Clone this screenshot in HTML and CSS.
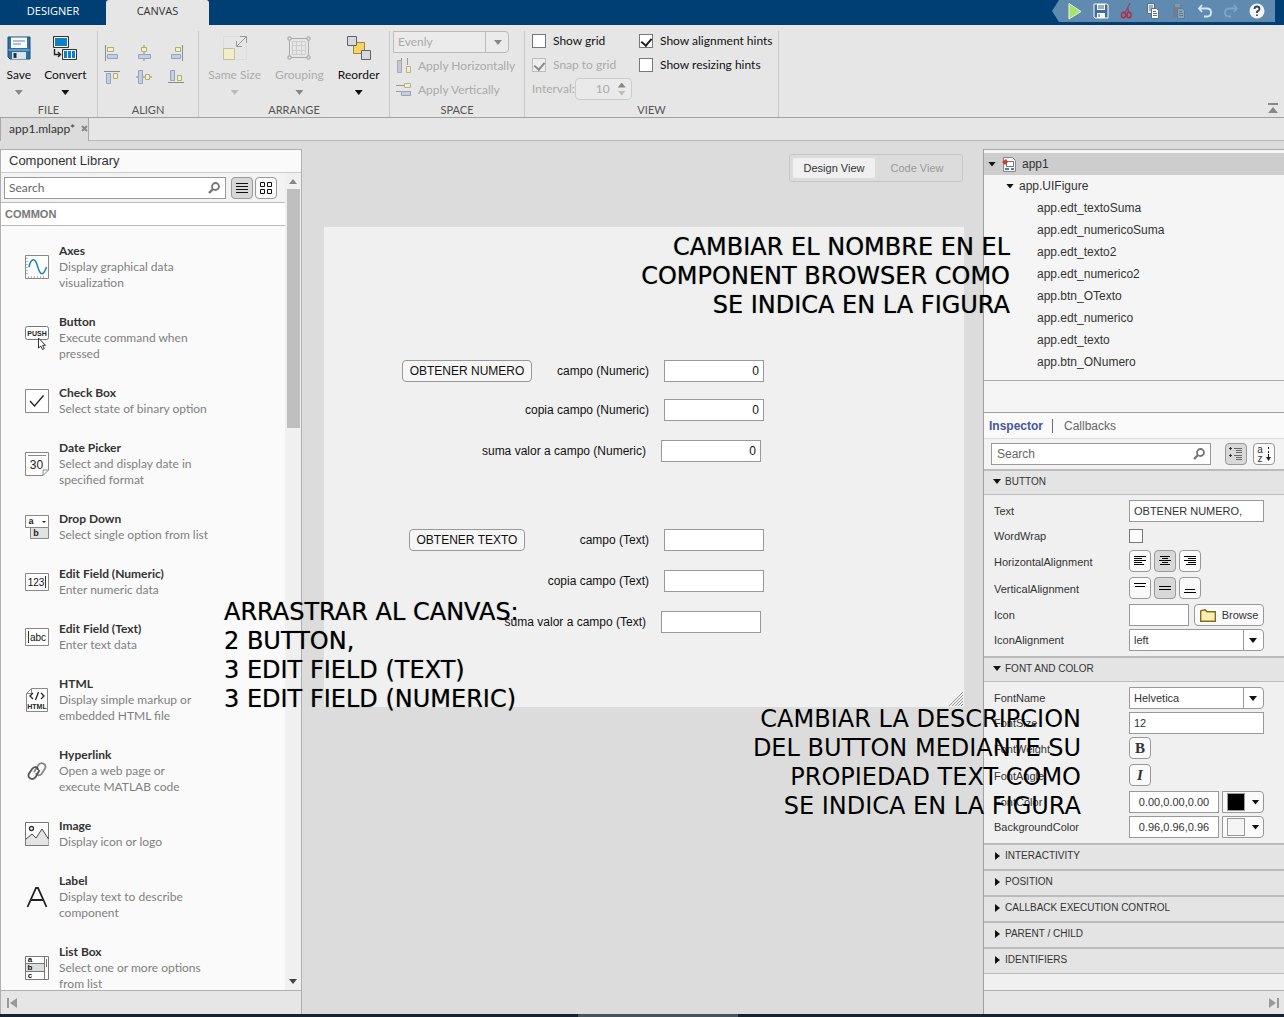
FILE: index.html
```html
<!DOCTYPE html>
<html lang="es">
<head>
<meta charset="utf-8">
<title>App Designer - app1.mlapp</title>
<link rel="stylesheet" href="styles.css">
</head>
<body>
<div class="app">
  <header class="tabbar">
    <button class="tab">DESIGNER</button>
    <button class="tab tab-active">CANVAS</button>
    <div class="quick">
      <button class="quick-btn" aria-label="Run"><svg width="16" height="18" viewBox="0 0 16 18"><path d="M2 1.500L14 9.500L2 17Z" fill="#a5e36a" stroke="#e8f8d8"/></svg></button>
      <button class="quick-btn" aria-label="Save"><svg width="16" height="16" viewBox="0 0 16 16"><path d="M1 1h13l1 1v13H2l-1-1z" fill="#3d6e9c" stroke="#fff"/><path d="M4 1h8v6H4zM4 10h8v5H4z" fill="#fff"/><path d="M5 3h6M5 5h6M6 11v3" stroke="#345d86"/></svg></button>
      <button class="quick-btn" aria-label="Cut"><svg width="16" height="16" viewBox="0 0 16 16"><path d="M11 0L6 10M9 5L9.500 10" stroke="#8b4862" stroke-width="1.300"/><ellipse cx="4.500" cy="12" rx="2" ry="2.800" fill="none" stroke="#b52a4a" stroke-width="1.500"/><ellipse cx="10" cy="12" rx="2" ry="2.800" fill="none" stroke="#b52a4a" stroke-width="1.500"/></svg></button>
      <button class="quick-btn" aria-label="Copy"><svg width="16" height="16" viewBox="0 0 16 16"><path d="M2.500 .5h7v10h-7z" fill="#e9eef3" stroke="#53708e"/><path d="M4 3h4M4 5h4M4 7h2" stroke="#53708e"/><path d="M6.500 5.500h5l2 2v8h-7z" fill="#fff" stroke="#53708e"/><path d="M8 8.500h3M8 10.500h4M8 12.500h4" stroke="#53708e"/></svg></button>
      <button class="quick-btn" aria-label="Paste"><svg width="16" height="16" viewBox="0 0 16 16"><path d="M2 2h9v12H2z" fill="#6f7f8c"/><path d="M4 1h5v3H4z" fill="#8797a4"/><path d="M6.500 5.500h5l2 2v8h-7z" fill="#86a2bc" stroke="#5d7c99"/><path d="M8 8.500h3M8 10.500h4M8 12.500h4" stroke="#5d7c99"/></svg></button>
      <button class="quick-btn" aria-label="Undo"><svg width="16" height="16" viewBox="0 0 16 16"><path d="M5 2L2 5.500L5 9M2 5.500H10Q14 5.500 14 9.500T10 13.500H7" fill="none" stroke="#d6e8fa" stroke-width="1.800"/></svg></button>
      <button class="quick-btn" aria-label="Redo"><svg width="16" height="16" viewBox="0 0 16 16"><path d="M11 2L14 5.500L11 9M14 5.500H6Q2 5.500 2 9.500T6 13.500H8" fill="none" stroke="#7fa5c9" stroke-width="1.800"/></svg></button>
      <button class="quick-btn" aria-label="Help"><svg width="16" height="16" viewBox="0 0 16 16"><circle cx="8" cy="8" r="7.500" fill="#f4f6f8"/><path d="M5.500 6Q5.500 3.500 8 3.500T10.500 6Q10.500 7.500 8 8.500V10M8 11.500V13" fill="none" stroke="#3d4650" stroke-width="1.800"/></svg></button>
    </div>
  </header>

  <section class="toolstrip">
    <div class="group group-file">
      <div class="group-body">
        <button class="big-btn">
          <svg width="24" height="24" viewBox="0 0 24 24"><path d="M1 1h22v22H3l-2-2z" fill="#2e6f9f" stroke="#1f4f76"/><path d="M4 1.500h16V12H4z" fill="#f5fafd"/><path d="M6 5h12M6 8h8" stroke="#6d8698"/><path d="M1.500 14h21" stroke="#9cc9e6"/><path d="M5 16h14v7H5z" fill="#dce4ea"/><path d="M8 17v5" stroke="#24333f" stroke-width="3"/></svg>
          <span>Save</span><i class="caret caret-grey"></i>
        </button>
        <button class="big-btn">
          <svg width="24" height="24" viewBox="0 0 24 24"><path d="M.5 .5h15v11H.5z" fill="#0b82c8" stroke="#333"/><path d="M1.500 1.500h13v9h-13z" fill="none" stroke="#fff"/><path d="M9.500 13.500h14v10h-14z" fill="#0b82c8" stroke="#333"/><path d="M10.500 14.500h12v8h-12zM14.500 14.500v8M18.500 14.500v8" fill="none" stroke="#fff"/><path d="M1.500 13v5.500H7M5 16l2.500 2.500L5 21" fill="none" stroke="#222" stroke-width="1.400"/></svg>
          <span>Convert</span><i class="caret"></i>
        </button>
      </div>
      <h2 class="group-name">FILE</h2>
    </div>

    <div class="group group-align">
      <div class="group-body align-grid">
        <button class="mini" aria-label="Align left"><svg width="16" height="16" viewBox="0 0 16 16"><path d="M1.500 0v16" stroke="#8a8a8a"/><path d="M3.500 2.500h6v4h-6z" fill="#f3efc8" stroke="#b5ab70"/><path d="M3.500 9.500h10v4h-10z" fill="#c3cfe2" stroke="#93a2bd"/></svg></button>
        <button class="mini" aria-label="Align center"><svg width="16" height="16" viewBox="0 0 16 16"><path d="M8 0v16" stroke="#8a8a8a"/><path d="M5.500 2.500h5v4h-5z" fill="#f3efc8" stroke="#b5ab70"/><path d="M2.500 9.500h12v4h-12z" fill="#c3cfe2" stroke="#93a2bd"/></svg></button>
        <button class="mini" aria-label="Align right"><svg width="16" height="16" viewBox="0 0 16 16"><path d="M14.500 0v16" stroke="#8a8a8a"/><path d="M7.500 2.500h5v4h-5z" fill="#f3efc8" stroke="#b5ab70"/><path d="M3.500 9.500h9v4h-9z" fill="#c3cfe2" stroke="#93a2bd"/></svg></button>
        <button class="mini" aria-label="Align top"><svg width="16" height="16" viewBox="0 0 16 16"><path d="M0 2.500h16" stroke="#8a8a8a"/><path d="M2.500 4.500h4v10h-4z" fill="#c3cfe2" stroke="#93a2bd"/><path d="M9.500 4.500h4v5h-4z" fill="#f3efc8" stroke="#b5ab70"/></svg></button>
        <button class="mini" aria-label="Align middle"><svg width="16" height="16" viewBox="0 0 16 16"><path d="M0 8h16" stroke="#8a8a8a"/><path d="M2.500 1.500h4v13h-4z" fill="#c3cfe2" stroke="#93a2bd"/><path d="M9.500 5.500h4v5h-4z" fill="#f3efc8" stroke="#b5ab70"/></svg></button>
        <button class="mini" aria-label="Align bottom"><svg width="16" height="16" viewBox="0 0 16 16"><path d="M0 13.500h16" stroke="#8a8a8a"/><path d="M2.500 1.500h4v10h-4z" fill="#c3cfe2" stroke="#93a2bd"/><path d="M9.500 6.500h4v5h-4z" fill="#f3efc8" stroke="#b5ab70"/></svg></button>
      </div>
      <h2 class="group-name">ALIGN</h2>
    </div>

    <div class="group group-arrange">
      <div class="group-body">
        <button class="big-btn" disabled>
          <svg width="24" height="24" viewBox="0 0 24 24"><path d="M.5 .5h23v23H.5z" fill="none" stroke="#dcdcdc"/><path d="M.5 12.500h11v11H.5z" fill="#f2eecb" stroke="#c6c09b"/><path d="M14 10L23 1M17 .5h6.500V7M13.500 5v5.500H19" fill="none" stroke="#999"/></svg>
          <span>Same Size</span><i class="caret caret-pale"></i>
        </button>
        <button class="big-btn" disabled>
          <svg width="24" height="24" viewBox="0 0 24 24"><path d="M2.500 2.500h19v19h-19z" fill="none" stroke="#aaa"/><path d="M5.500 5.500h13v13h-13zM9.500 5.500v13M14.500 5.500v13M5.500 9.500h13M5.500 14.500h13" fill="none" stroke="#ccc"/><path d="M1 1h3v3H1zM20 1h3v3h-3zM1 20h3v3H1zM20 20h3v3h-3z" fill="#ddd" stroke="#aaa"/></svg>
          <span>Grouping</span><i class="caret caret-grey"></i>
        </button>
        <button class="big-btn">
          <svg width="24" height="24" viewBox="0 0 24 24"><path d="M6.500 6.500h11v11h-11z" fill="#f5d36a" stroke="#a98724"/><path d="M.5 .5h9v9h-9z" fill="#d5dade" stroke="#5d6367"/><path d="M14.500 14.500h9v9h-9z" fill="#d5dade" stroke="#5d6367"/></svg>
          <span>Reorder</span><i class="caret"></i>
        </button>
      </div>
      <h2 class="group-name">ARRANGE</h2>
    </div>

    <div class="group group-space">
      <div class="group-body stack">
        <div class="combo combo-dim"><select aria-label="Spacing" disabled><option>Evenly</option></select><i class="caret caret-grey"></i></div>
        <button class="line-btn" disabled><svg width="16" height="16" viewBox="0 0 16 16"><path d="M5.500 0v5M11.500 0v7" stroke="#999"/><path d="M1.500 2.500h4v12h-4z" fill="#c6c6d2" stroke="#aaa"/><path d="M10.500 8.500h4v6h-4z" fill="#f0ecd0" stroke="#b9b28a"/></svg>Apply Horizontally</button>
        <button class="line-btn" disabled><svg width="16" height="16" viewBox="0 0 16 16"><path d="M0 3.500h8M0 9.500h5" stroke="#999"/><path d="M8.500 1.500h6v4h-6z" fill="#f0ecd0" stroke="#b9b28a"/><path d="M5.500 9.500h9v4h-9z" fill="#c6cbe2" stroke="#999fba"/></svg>Apply Vertically</button>
      </div>
      <h2 class="group-name">SPACE</h2>
    </div>

    <div class="group group-view">
      <div class="group-body view-cols">
        <div class="stack">
          <label class="check"><input type="checkbox">Show grid</label>
          <label class="check check-dim"><input type="checkbox" checked disabled>Snap to grid</label>
          <div class="interval"><label for="interval">Interval:</label><div class="spin"><input id="interval" value="10" disabled><span class="spin-arrows"><i class="caret caret-up"></i><i class="caret caret-pale"></i></span></div></div>
        </div>
        <div class="stack">
          <label class="check"><input type="checkbox" checked>Show alignment hints</label>
          <label class="check"><input type="checkbox">Show resizing hints</label>
        </div>
      </div>
      <h2 class="group-name">VIEW</h2>
    </div>
    <button class="collapse" aria-label="Minimize toolstrip"><svg width="12" height="10" viewBox="0 0 12 10"><path d="M1 0h10v2H1zM6 4l5 6H1z" fill="#888"/></svg></button>
  </section>

  <nav class="docs">
    <div class="doc"><span>app1.mlapp*</span><button aria-label="Close"><svg width="7" height="7" viewBox="0 0 7 7"><path d="M1 1l5 5M6 1L1 6" stroke="#888" stroke-width="2"/></svg></button></div>
    <div class="docs-rest"></div>
  </nav>

  <main class="work">
    <aside class="library">
      <h1 class="lib-title">Component Library</h1>
      <div class="lib-main">
        <div class="lib-left">
          <div class="lib-search">
            <div class="search"><input type="text" placeholder="Search" aria-label="Search components"><svg width="12" height="12" viewBox="0 0 12 12"><circle cx="7.500" cy="4.500" r="3.500" fill="none" stroke="#777" stroke-width="1.800"/><path d="M5 7L1 11" stroke="#777" stroke-width="2.400"/></svg></div>
            <button class="tog tog-on" aria-label="List view"><svg width="14" height="12" viewBox="0 0 14 12"><path d="M1 1.500h12M1 4.500h12M1 7.500h12M1 10.500h12" stroke="#111"/></svg></button>
            <button class="tog" aria-label="Grid view"><svg width="14" height="14" viewBox="0 0 14 14"><path d="M1.500 1.500h4v4h-4zM8.500 1.500h4v4h-4zM1.500 8.500h4v4h-4zM8.500 8.500h4v4h-4z" fill="none" stroke="#111"/></svg></button>
          </div>
          <h2 class="lib-cat">COMMON</h2>
          <ul class="items">
            <li><svg width="24" height="24" viewBox="0 0 24 24"><path d="M.5 .5h23v23H.5z" fill="#fff" stroke="#888"/><path d="M2 3v18M3 22h18" stroke="#777" stroke-dasharray="1 2"/><path d="M4 12C6 3 10 2 12.500 11S18 22 21.500 12" fill="none" stroke="#1482b4" stroke-width="1.500"/></svg><div><h3>Axes</h3><p>Display graphical data<br>visualization</p></div></li>
            <li><svg width="24" height="24" viewBox="0 0 24 24"><rect x=".5" y=".5" width="23" height="13" rx="2" fill="#fff" stroke="#777"/><text x="12" y="10" class="t-push">PUSH</text><path d="M13.500 12v10l2.300-2 1.700 3.500 1.800-.8-1.700-3.400h2.900z" fill="#fff" stroke="#333"/></svg><div><h3>Button</h3><p>Execute command when<br>pressed</p></div></li>
            <li><svg width="24" height="24" viewBox="0 0 24 24"><path d="M.5 .5h23v23H.5z" fill="#fff" stroke="#888"/><path d="M5 12l4.500 5L18.500 6.500" fill="none" stroke="#222" stroke-width="1.300"/></svg><div><h3>Check Box</h3><p>Select state of binary option</p></div></li>
            <li><svg width="24" height="24" viewBox="0 0 24 24"><path d="M.5 .5h23V18L18 23.500H.5z" fill="#fff" stroke="#888"/><path d="M23.500 18H18v5.500M3 3.500h18" fill="none" stroke="#888"/><text x="11.500" y="17" class="t-date">30</text></svg><div><h3>Date Picker</h3><p>Select and display date in<br>specified format</p></div></li>
            <li><svg width="24" height="24" viewBox="0 0 24 24"><path d="M5.500 12.500h18v11h-18z" fill="#e2e2e2" stroke="#888"/><path d="M.5 .5h23v12H.5z" fill="#fff" stroke="#888"/><path d="M17 6h4l-2 2z" fill="#222"/><text x="6" y="9" class="t-letter">a</text><text x="11" y="21" class="t-letter">b</text></svg><div><h3>Drop Down</h3><p>Select single option from list</p></div></li>
            <li><svg width="24" height="18" viewBox="0 0 24 18"><path d="M.5 .5h23v17H.5z" fill="#fff" stroke="#888"/><text x="11" y="13" class="t-field">123</text><path d="M20.500 3v12" stroke="#333"/></svg><div><h3>Edit Field (Numeric)</h3><p>Enter numeric data</p></div></li>
            <li><svg width="24" height="18" viewBox="0 0 24 18"><path d="M.5 .5h23v17H.5z" fill="#fff" stroke="#888"/><text x="13" y="13" class="t-field">abc</text><path d="M3.500 3v12" stroke="#333"/></svg><div><h3>Edit Field (Text)</h3><p>Enter text data</p></div></li>
            <li><svg width="24" height="24" viewBox="0 0 24 24"><path d="M6.500 .5h16v23h-21V5.500z" fill="#fff" stroke="#888"/><path d="M1.500 5.500h5v-5" fill="none" stroke="#888"/><path d="M8 5L5 8l3 3M16 5l3 3-3 3M13.500 4l-3 8" fill="none" stroke="#222" stroke-width="1.300"/><text x="12" y="21" class="t-push">HTML</text></svg><div><h3>HTML</h3><p>Display simple markup or<br>embedded HTML file</p></div></li>
            <li><svg width="24" height="24" viewBox="0 0 24 24" fill="none" stroke-width="1.800"><path d="M9 13L13 6.500C16 2 22 5 20 9.500L16.500 15C15 17 11.500 17 11 14" stroke="#888"/><path d="M14.500 11L11 17.500C8 22.500 1.500 19 4 14.500L7.500 9.500C9.500 7 13 8 13 11" stroke="#555"/></svg><div><h3>Hyperlink</h3><p>Open a web page or<br>execute MATLAB code</p></div></li>
            <li><svg width="24" height="24" viewBox="0 0 24 24"><path d="M.5 .5h23v23H.5z" fill="#fff" stroke="#777"/><path d="M1 17l6-5 4 4 6-9 6.500 10V23H1z" fill="#e4e4e4"/><path d="M1 17l6-5 4 4 6-9 6.500 10" fill="none" stroke="#444"/><circle cx="6.500" cy="6.500" r="2" fill="none" stroke="#333" stroke-width="1.300"/></svg><div><h3>Image</h3><p>Display icon or logo</p></div></li>
            <li><svg width="24" height="24" viewBox="0 0 24 24"><path d="M2.500 22L11 3h2l8.500 19M6 15h12" fill="none" stroke="#222" stroke-width="1.800"/></svg><div><h3>Label</h3><p>Display text to describe<br>component</p></div></li>
            <li><svg width="24" height="24" viewBox="0 0 24 24"><path d="M.5 .5h23v23H.5z" fill="#fff" stroke="#777"/><path d="M1 7.500h18v8H1z" fill="#ddd"/><path d="M19.500 1v22M1 7.500h18M1 15.500h18M21.500 3v8" stroke="#777"/><text x="5" y="6" class="t-list">a</text><text x="5" y="14" class="t-list">b</text><text x="5" y="22" class="t-list">c</text></svg><div><h3>List Box</h3><p>Select one or more options<br>from list</p></div></li>
          </ul>
        </div>
        <div class="scroll"><i class="caret caret-up"></i><div class="thumb"></div><i class="caret caret-dark"></i></div>
      </div>
      <footer class="panel-foot"><button aria-label="Collapse library"><svg width="12" height="12" viewBox="0 0 12 12"><path d="M1 1h2v10H1zM11 1v10L4 6z" fill="#999"/></svg></button></footer>
    </aside>

    <section class="center">
      <div class="views">
        <button class="view view-on">Design View</button>
        <button class="view">Code View</button>
      </div>
      <div class="figure">
        <button class="w-btn w-numero">OBTENER NUMERO</button>
        <div class="w-row w-n1"><label for="n1">campo (Numeric)</label><input id="n1" class="num" value="0"></div>
        <div class="w-row w-n2"><label for="n2">copia campo (Numeric)</label><input id="n2" class="num" value="0"></div>
        <div class="w-row w-n3"><label for="n3">suma valor a campo (Numeric)</label><input id="n3" class="num" value="0"></div>
        <button class="w-btn w-texto">OBTENER TEXTO</button>
        <div class="w-row w-t1"><label for="t1">campo (Text)</label><input id="t1"></div>
        <div class="w-row w-t2"><label for="t2">copia campo (Text)</label><input id="t2"></div>
        <div class="w-row w-t3"><label for="t3">suma valor a campo (Text)</label><input id="t3"></div>
        <svg class="grip" width="14" height="14" viewBox="0 0 14 14"><path d="M0 14L14 0M3 14L14 3M6 14l8-8M9 14l5-5M12 14l2-2" stroke="#999"/></svg>
      </div>
    </section>

    <aside class="side">
      <ul class="tree">
        <li class="node node-sel"><i class="caret"></i><svg width="14" height="15" viewBox="0 0 14 15"><path d="M1.500 .5h9l3 3v11h-12z" fill="#f4f4f4" stroke="#888"/><path d="M4.500 4.500h7v5h-7z" fill="#fff" stroke="#69727c"/><path d="M3 12h4M9 12h3" stroke="#5c7c9a" stroke-width="2"/><path d="M0 5l4-3 2 3-3 3z" fill="#c0442c"/></svg>app1</li>
        <li class="node node-2"><i class="caret"></i>app.UIFigure</li>
        <li class="node node-3">app.edt_textoSuma</li>
        <li class="node node-3">app.edt_numericoSuma</li>
        <li class="node node-3">app.edt_texto2</li>
        <li class="node node-3">app.edt_numerico2</li>
        <li class="node node-3">app.btn_OTexto</li>
        <li class="node node-3">app.edt_numerico</li>
        <li class="node node-3">app.edt_texto</li>
        <li class="node node-3">app.btn_ONumero</li>
      </ul>
      <div class="inspector">
        <div class="insp-tabs"><button class="insp-on">Inspector</button><button>Callbacks</button></div>
        <div class="insp-search">
          <div class="search"><input type="text" placeholder="Search" aria-label="Search properties"><svg width="12" height="12" viewBox="0 0 12 12"><circle cx="7.500" cy="4.500" r="3.500" fill="none" stroke="#777" stroke-width="1.800"/><path d="M5 7L1 11" stroke="#777" stroke-width="2.400"/></svg></div>
          <button class="tog tog-on" aria-label="Grouped"><svg width="14" height="14" viewBox="0 0 14 14"><path d="M5 1.500h8M7 3.500h6M7 5.500h6M5 8.500h8M7 10.500h6M7 12.500h6" stroke="#666"/><path d="M0 1.500h3M1.500 0v3M0 8.500h3M1.500 7v3" stroke="#333"/></svg></button>
          <button class="tog" aria-label="Alphabetical"><svg width="18" height="18" viewBox="0 0 18 18"><text x="5" y="8" class="t-sort">a</text><text x="5" y="17" class="t-sort">z</text><path d="M13.500 2v2M13.500 6v2M13.500 9v6" stroke="#222"/><path d="M11 12h5l-2.500 4z" fill="#222"/></svg></button>
        </div>
        <button class="sec sec-open"><i class="caret"></i>BUTTON</button>
        <div class="props">
          <div class="prop"><label for="p-text">Text</label><input id="p-text" class="field field-wide" value="OBTENER NUMERO,"></div>
          <div class="prop"><label for="p-wrap">WordWrap</label><input id="p-wrap" type="checkbox"></div>
          <div class="prop prop-tall"><span>HorizontalAlignment</span><div class="set">
            <button class="tog" aria-label="Left"><svg width="14" height="12" viewBox="0 0 14 12"><path d="M1 1.500h12M1 3.500h8M1 5.500h12M1 7.500h8M1 9.500h10" stroke="#000"/></svg></button>
            <button class="tog tog-on" aria-label="Center"><svg width="14" height="12" viewBox="0 0 14 12"><path d="M2 1.500h10M4 3.500h6M1 5.500h12M4 7.500h6M2 9.500h10" stroke="#000"/></svg></button>
            <button class="tog" aria-label="Right"><svg width="14" height="12" viewBox="0 0 14 12"><path d="M1 1.500h12M5 3.500h8M1 5.500h12M5 7.500h8M3 9.500h10" stroke="#000"/></svg></button></div></div>
          <div class="prop prop-tall"><span>VerticalAlignment</span><div class="set">
            <button class="tog" aria-label="Top"><svg width="14" height="16" viewBox="0 0 14 16"><path d="M1 3.500h12M2 6.500h10" stroke="#000"/></svg></button>
            <button class="tog tog-on" aria-label="Middle"><svg width="14" height="16" viewBox="0 0 14 16"><path d="M1 6.500h12M1 9.500h12" stroke="#000"/></svg></button>
            <button class="tog" aria-label="Bottom"><svg width="14" height="16" viewBox="0 0 14 16"><path d="M2 9.500h10M1 12.500h12" stroke="#000"/></svg></button></div></div>
          <div class="prop"><label for="p-icon">Icon</label><div class="set"><input id="p-icon" class="field field-icon"><button class="browse"><svg width="16" height="13" viewBox="0 0 16 13"><path d="M.7 12.300V1.700L5 .7l2 2h8.300v9.600z" fill="#fbeeb0" stroke="#8a6a1e" stroke-width="1.400"/></svg>Browse</button></div></div>
          <div class="prop"><label for="p-ia">IconAlignment</label><div class="combo"><select id="p-ia"><option>left</option></select><i class="caret"></i></div></div>
        </div>
        <button class="sec sec-open"><i class="caret"></i>FONT AND COLOR</button>
        <div class="props">
          <div class="prop"><label for="p-fn">FontName</label><div class="combo"><select id="p-fn"><option>Helvetica</option></select><i class="caret"></i></div></div>
          <div class="prop"><label for="p-fs">FontSize</label><input id="p-fs" class="field field-wide" value="12"></div>
          <div class="prop prop-tall"><span>FontWeight</span><button class="tog tog-b">B</button></div>
          <div class="prop prop-tall"><span>FontAngle</span><button class="tog tog-i">I</button></div>
          <div class="prop"><label for="p-fc">FontColor</label><div class="set"><input id="p-fc" class="field field-rgb" value="0.00,0.00,0.00"><button class="color" aria-label="Pick font color"><span class="chip chip-black"></span><i class="caret"></i></button></div></div>
          <div class="prop"><label for="p-bc">BackgroundColor</label><div class="set"><input id="p-bc" class="field field-rgb" value="0.96,0.96,0.96"><button class="color" aria-label="Pick background color"><span class="chip"></span><i class="caret"></i></button></div></div>
        </div>
        <button class="sec"><i class="caret caret-right"></i>INTERACTIVITY</button>
        <button class="sec"><i class="caret caret-right"></i>POSITION</button>
        <button class="sec"><i class="caret caret-right"></i>CALLBACK EXECUTION CONTROL</button>
        <button class="sec"><i class="caret caret-right"></i>PARENT / CHILD</button>
        <button class="sec sec-last"><i class="caret caret-right"></i>IDENTIFIERS</button>
      </div>
      <footer class="panel-foot foot-right"><button aria-label="Collapse browser"><svg width="12" height="12" viewBox="0 0 12 12"><path d="M9 1h2v10H9zM1 1v10l7-5z" fill="#999"/></svg></button></footer>
    </aside>
  </main>
  <div class="taskbar"><span></span></div>

  <p class="note note-names">CAMBIAR EL NOMBRE EN EL<br>COMPONENT BROWSER COMO<br>SE INDICA EN LA FIGURA</p>
  <p class="note note-drag">ARRASTRAR AL CANVAS:<br>2 BUTTON,<br>3 EDIT FIELD (TEXT)<br>3 EDIT FIELD (NUMERIC)</p>
  <p class="note note-text">CAMBIAR LA DESCRIPCION<br>DEL BUTTON MEDIANTE SU<br>PROPIEDAD TEXT COMO<br>SE INDICA EN LA FIGURA</p>
</div>
</body>
</html>
```
FILE: styles.css
```css
* { box-sizing: border-box; }
body { margin: 0; font: 12px/16px "Liberation Sans", Arial, sans-serif; color: #333; }
h1, h2, h3, p, ul { margin: 0; padding: 0; font-size: inherit; font-weight: normal; }
ul { list-style: none; }
button, input, select { font: inherit; color: inherit; margin: 0; padding: 0; border: 0; background: none; border-radius: 0; }
button { display: flex; align-items: center; justify-content: center; white-space: nowrap; }
svg { display: block; flex: none; }
select { appearance: none; opacity: 1; }

.app { position: relative; display: flex; flex-direction: column; height: 100vh; background: #dcdcdc; overflow: hidden; }

/* carets */
.caret { flex: none; width: 8px; height: 5px; background: #111; clip-path: polygon(0 0, 100% 0, 50% 100%); }
.caret-grey { background: #888; }
.caret-dark { background: #444; }
.caret-pale { background: #bbb; }
.caret-up { background: #888; clip-path: polygon(50% 0, 100% 100%, 0 100%); }
.caret-right { width: 5px; height: 8px; clip-path: polygon(0 0, 100% 50%, 0 100%); }

/* tab bar */
.tabbar { flex: none; display: flex; height: 25px; background: #003f73; font-family: "Open Sans", sans-serif; font-size: 11px; }
.tab { width: 106px; padding-bottom: 3px; color: #fff; }
.tab-active { width: 103px; background: #e6e6e6; color: #333; border-radius: 3px 3px 0 0; }
.quick { display: flex; gap: 10px; height: 22px; margin: 0 9px 0 auto; padding: 0 10px 0 15px; background: #618ab0; clip-path: polygon(7px 0, 100% 0, 100% 100%, 7px 100%, 0 50%); }
.quick-btn { width: 16px; }

/* toolstrip */
.toolstrip { flex: none; display: flex; height: 93px; background: #e6e6e6; border-bottom: 1px solid #a0a0a0; font-family: Lato, "Open Sans", sans-serif; }
.group { display: flex; flex-direction: column; margin-top: 6px; border-right: 1px solid #c8c8c8; }
.group-body { flex: 1; display: flex; justify-content: center; }
.group-name { height: 15px; text-align: center; font-size: 11px; color: #555; }
.group-file { width: 98px; }
.group-align { width: 101px; }
.group-arrange { width: 191px; }
.group-space { width: 135px; }
.group-view { width: 254px; }
.big-btn { flex-direction: column; justify-content: flex-start; padding-top: 5px; color: #111; }
.big-btn span { margin: 7px 0; }
.big-btn:disabled { color: #aaa; }
.group-file .group-body { gap: 13px; padding-right: 4px; }
.group-arrange .group-body { gap: 14px; }
.align-grid { display: grid; grid-template-columns: repeat(3, 16px); gap: 8px 16px; align-content: start; padding: 14px 8px 0 0; }
.stack { display: flex; flex-direction: column; align-items: flex-start; justify-content: flex-start; gap: 8px; }
.line-btn { gap: 6px; color: #aaa; }
.group-space .stack { padding-left: 3px; }
.line-btn { padding-left: 3px; }
.combo { display: flex; position: relative; width: 134px; height: 22px; align-items: center; background: #fff; border: 1px solid #999; border-radius: 0 4px 4px 0; font-size: 11px; }
.combo select { width: 100%; height: 20px; padding: 0 24px 0 4px; }
.combo .caret { position: absolute; right: 6px; top: 8px; pointer-events: none; }
.combo::after { content: ""; position: absolute; right: 19px; top: 0; bottom: 0; border-left: 1px solid #999; }
.combo-dim { width: 116px; background: #ebebeb; border-color: #bbb; color: #aaa; font-size: 12px; margin-bottom: -3px; }
.combo-dim::after { right: 22px; border-color: #bbb; }
.view-cols { display: grid; grid-template-columns: 100px auto; justify-content: start; gap: 7px; padding: 2px 0 0 7px; }
.check { display: flex; align-items: center; gap: 7px; color: #111; white-space: nowrap; }
.check-dim { color: #aaa; }
input[type=checkbox] { appearance: none; display: flex; justify-content: center; flex: none; width: 14px; height: 14px; background: #fff; border: 1px solid #777; }
input[type=checkbox]:checked::after { content: ""; width: 5px; height: 8px; margin-top: 1px; border: solid #222; border-width: 0 2px 2px 0; transform: rotate(40deg); }
input[type=checkbox]:disabled { background: #eee; border-color: #bbb; }
input[type=checkbox]:disabled::after { border-color: #888; }
.interval { display: flex; align-items: center; justify-content: space-between; width: 100px; color: #aaa; margin-top: -3px; }
.spin { display: flex; align-items: center; width: 58px; height: 22px; border: 1px solid #ccc; border-radius: 4px; background: #eaeaea; }
.spin input { width: 42px; padding-right: 8px; text-align: right; }
.spin-arrows { display: flex; flex-direction: column; gap: 3px; }
.collapse { align-self: flex-end; margin: 0 5px 4px auto; }

/* document tabs */
.docs { flex: none; display: flex; height: 23px; font-family: Lato, "Open Sans", sans-serif; }
.doc { display: flex; align-items: center; gap: 6px; padding: 0 5px 2px 8px; width: 89px; border: solid #a8a8a8; border-width: 0 1px; }
.docs-rest { flex: 1; background: #e6e6e6; border-bottom: 1px solid #b8b8b8; }

/* work area */
.work { flex: 1; display: flex; min-height: 0; padding-top: 8px; }
.library { display: flex; flex-direction: column; width: 302px; background: #fafafa; border: 1px solid #b0b0b0; border-bottom: 0; }
.lib-title { flex: none; height: 23px; padding: 3px 8px; font-size: 13px; border-bottom: 1px solid #ccc; }
.lib-main { flex: 1; display: flex; min-height: 0; }
.lib-left { flex: 1; display: flex; flex-direction: column; overflow: hidden; }
.lib-search { flex: none; display: flex; align-items: center; height: 29px; padding: 0 8px 0 3px; background: #f3f3f3; font-family: Lato, "Open Sans", sans-serif; }
.search { display: flex; align-items: center; height: 22px; padding: 0 5px; background: #fff; border: 1px solid #999; }
.search input { flex: 1; min-width: 0; outline: 0; }
.search input::placeholder { color: #666; opacity: 1; }
.lib-search .search { flex: 1; margin-right: 5px; padding-left: 4px; }
.tog { width: 22px; height: 22px; background: #fafafa; border: 1px solid #999; border-radius: 4px; }
.tog-on { background: #d8d8d8; }
.lib-search .tog + .tog { margin-left: 2px; }
.lib-cat { flex: none; height: 24px; padding: 3px 4px; background: #fff; border: solid #bbb; border-width: 1px 0; font-size: 11px; font-weight: bold; color: #777; }
.items { flex: 1; min-height: 0; overflow: hidden; display: flex; flex-direction: column; gap: 23px; padding: 17px 20px 0 24px; font-family: Lato, "Open Sans", sans-serif; }
.items li { flex: none; display: flex; align-items: center; gap: 10px; }
.items h3 { font-weight: bold; color: #333; }
.items p { color: #808080; }
.t-push { font: bold 7px "Liberation Sans", sans-serif; text-anchor: middle; fill: #222; }
.t-date { font: 12px "Liberation Sans", sans-serif; text-anchor: middle; fill: #222; }
.t-letter { font: bold 9px "Liberation Sans", sans-serif; text-anchor: middle; fill: #222; }
.t-field { font: 10px "Liberation Sans", sans-serif; text-anchor: middle; fill: #111; }
.t-list { font: bold 8px "Liberation Sans", sans-serif; text-anchor: middle; fill: #111; }
.t-sort { font: 10px "Liberation Sans", sans-serif; text-anchor: middle; fill: #333; }
.scroll { display: flex; flex-direction: column; align-items: center; width: 16px; padding: 6px 0; background: #f0f0f0; }
.thumb { width: 13px; height: 239px; margin: 5px 0 auto; background: #bfbfbf; }
.panel-foot { flex: none; display: flex; align-items: center; height: 24px; padding: 0 5px; background: #e6e6e6; border-top: 1px solid #b0b0b0; }
.foot-right { justify-content: flex-end; padding-right: 4px; }

/* center */
.center { flex: 1; display: flex; flex-direction: column; align-items: flex-end; padding: 5px 19px 0 0; min-width: 0; }
.views { display: flex; padding: 3px; margin: 0 1px 45px 0; border: 1px solid #c4c4c4; border-radius: 3px; font-size: 11px; }
.view { width: 82px; height: 20px; color: #999; }
.view + .view { width: 84px; }
.view-on { background: #f0f0f0; color: #333; border-radius: 2px; }
.figure { position: relative; flex: none; width: 640px; height: 480px; background: #f0f0f0; color: #111; }
.w-btn { position: absolute; height: 22px; background: #f6f6f6; border: 1px solid #999; border-radius: 4px; }
.w-row { position: absolute; right: 200px; display: flex; align-items: center; gap: 15px; }
.w-row input { width: 100px; height: 22px; padding: 0 4px; background: #fff; border: 1px solid #999; }
.w-row .num { text-align: right; }
.w-numero { left: 78px; top: 133px; width: 130px; }
.w-texto { left: 85px; top: 302px; width: 116px; }
.w-n1 { top: 133px; }
.w-n2 { top: 172px; }
.w-n3 { top: 213px; right: 203px; }
.w-t1 { top: 302px; }
.w-t2 { top: 343px; }
.w-t3 { top: 384px; right: 203px; }
.grip { position: absolute; right: 1px; bottom: 1px; }

/* browser and inspector */
.side { display: flex; flex-direction: column; width: 301px; background: #f5f5f5; border-left: 1px solid #a0a0a0; }
.tree { padding: 3px 0 7px; border: solid #a8a8a8; border-width: 1px 0; }
.node { display: flex; align-items: center; height: 22px; }
.node-sel { gap: 6px; padding-left: 4px; background: #cdcdcd; }
.node-2 { gap: 5px; padding-left: 22px; }
.node-3 { padding-left: 53px; }
.inspector { flex: 1; display: flex; flex-direction: column; min-height: 0; margin-top: 31px; background: #f0f0f0; border-top: 1px solid #a0a0a0; }
.insp-tabs { display: flex; align-items: center; height: 26px; padding: 0 5px; background: #fafafa; border-bottom: 1px solid #ddd; color: #666; }
.insp-tabs .insp-on { margin-right: 11px; padding-right: 9px; border-right: 1px solid #5a6f9c; color: #44599c; font-weight: bold; line-height: 14px; }
.insp-search { display: flex; align-items: center; height: 30px; padding: 0 9px 0 7px; gap: 6px; background: #f3f3f3; }
.insp-search .search { flex: 1; margin-right: 8px; }
.sec { flex: none; justify-content: flex-start; gap: 4px; width: 100%; height: 26px; padding: 0 9px 2px; background: #e4e4e4; border-top: 2px solid #bbb; font-size: 10px; color: #333; }
.sec .caret-right { margin: 0 1px 0 2px; }
.sec-open { border-bottom: 1px solid #bbb; }
.sec-last { height: 27px; border-bottom: 1px solid #bbb; }
.props { display: grid; gap: 3px; padding: 5px 20px 5px 10px; font-size: 11px; }
.prop { display: grid; grid-template-columns: 1fr 135px; align-items: center; height: 22px; }
.prop-tall { height: 24px; }
.set { display: flex; gap: 3px; }
.prop-tall .tog { margin-bottom: 2px; }
.field { height: 22px; padding: 0 4px; background: #fff; border: 1px solid #999; }
.field-wide { width: 135px; }
.field-icon { width: 60px; margin-right: 2px; }
.browse { width: 70px; height: 22px; gap: 6px; background: #fafafa; border: 1px solid #999; border-radius: 4px; }
.prop .combo { width: 135px; }
.field-rgb { width: 90px; text-align: center; }
.color { width: 42px; height: 22px; gap: 7px; background: #fafafa; border: 1px solid #999; border-radius: 0 4px 4px 0; }
.chip { width: 18px; height: 18px; border: 1px solid #999; background: #f5f5f5; }
.chip-black { background: #000; }
.tog-b { font: bold 15px "Liberation Serif", serif; }
.tog-i { font: italic bold 15px "Liberation Serif", serif; }

/* desktop strip */
.taskbar { flex: none; height: 3px; padding-left: 45%; background: #1a2230; }
.taskbar span { display: block; width: 160px; height: 3px; background: #4a525c; }

/* annotations laid over the window */
.note { position: absolute; font: 24px/29px "DejaVu Sans", sans-serif; color: #000; white-space: nowrap; }
.note-names { top: 233px; right: 274px; text-align: right; text-shadow: 0 0 1px rgba(0, 0, 0, .5); }
.note-drag { top: 598px; left: 224px; text-shadow: 0 0 1px rgba(0, 0, 0, .5); }
.note-text { top: 705px; right: 203px; text-align: right; }
```
